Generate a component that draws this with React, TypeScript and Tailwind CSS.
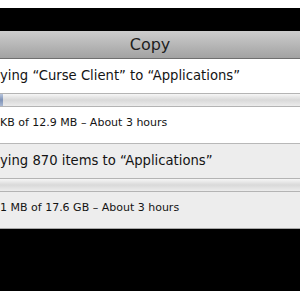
import React from 'react';

const font = { fontFamily: '"DejaVu Sans", "Lucida Grande", sans-serif' };

function ProgressBar({ fill }: { fill?: boolean }) {
  return (
    <div className="relative h-[14px] border-y border-[#b4b4b4] bg-gradient-to-b from-[#f6f6f6] via-[#d9d9d9] to-[#ececec]">
      {fill && <div className="absolute left-0 top-0 h-full w-[3px] bg-gradient-to-b from-[#b8c6de] via-[#7f93b8] to-[#a9b8d2]" />}
    </div>
  );
}

export default function App() {
  return (
    <div className="w-[300px] h-[300px] bg-white flex flex-col overflow-hidden text-[#141414]" style={font}>
      <div className="h-[8px] bg-white" />
      <div className="h-[23px] bg-black" />

      {/* Title bar */}
      <div className="h-[28px] flex items-center justify-center bg-gradient-to-b from-[#cdcdcd] to-[#a2a2a2] border-b border-[#6f6f6f] text-[16px] text-[#1e1e1e]">
        Copy
      </div>

      {/* Item 1 */}
      <div className="h-[34px] bg-white flex items-center text-[13.2px] whitespace-nowrap">
        ying “Curse Client” to “Applications”
      </div>
      <ProgressBar fill />
      <div className="h-[36px] bg-white flex items-center pb-[4px] text-[11px] whitespace-nowrap">
        KB of 12.9 MB – About 3 hours
      </div>

      {/* Item 2 */}
      <div className="h-[35px] bg-[#ededed] border-t border-[#b8b8b8] flex items-center text-[13.2px] whitespace-nowrap">
        ying 870 items to “Applications”
      </div>
      <ProgressBar />
      <div className="h-[37px] bg-[#ededed] border-b border-[#a8a8a8] flex items-center pb-[4px] text-[11px] whitespace-nowrap">
        1 MB of 17.6 GB – About 3 hours
      </div>

      <div className="h-[62px] bg-black" />
      <div className="flex-1 bg-white" />
    </div>
  );
}
